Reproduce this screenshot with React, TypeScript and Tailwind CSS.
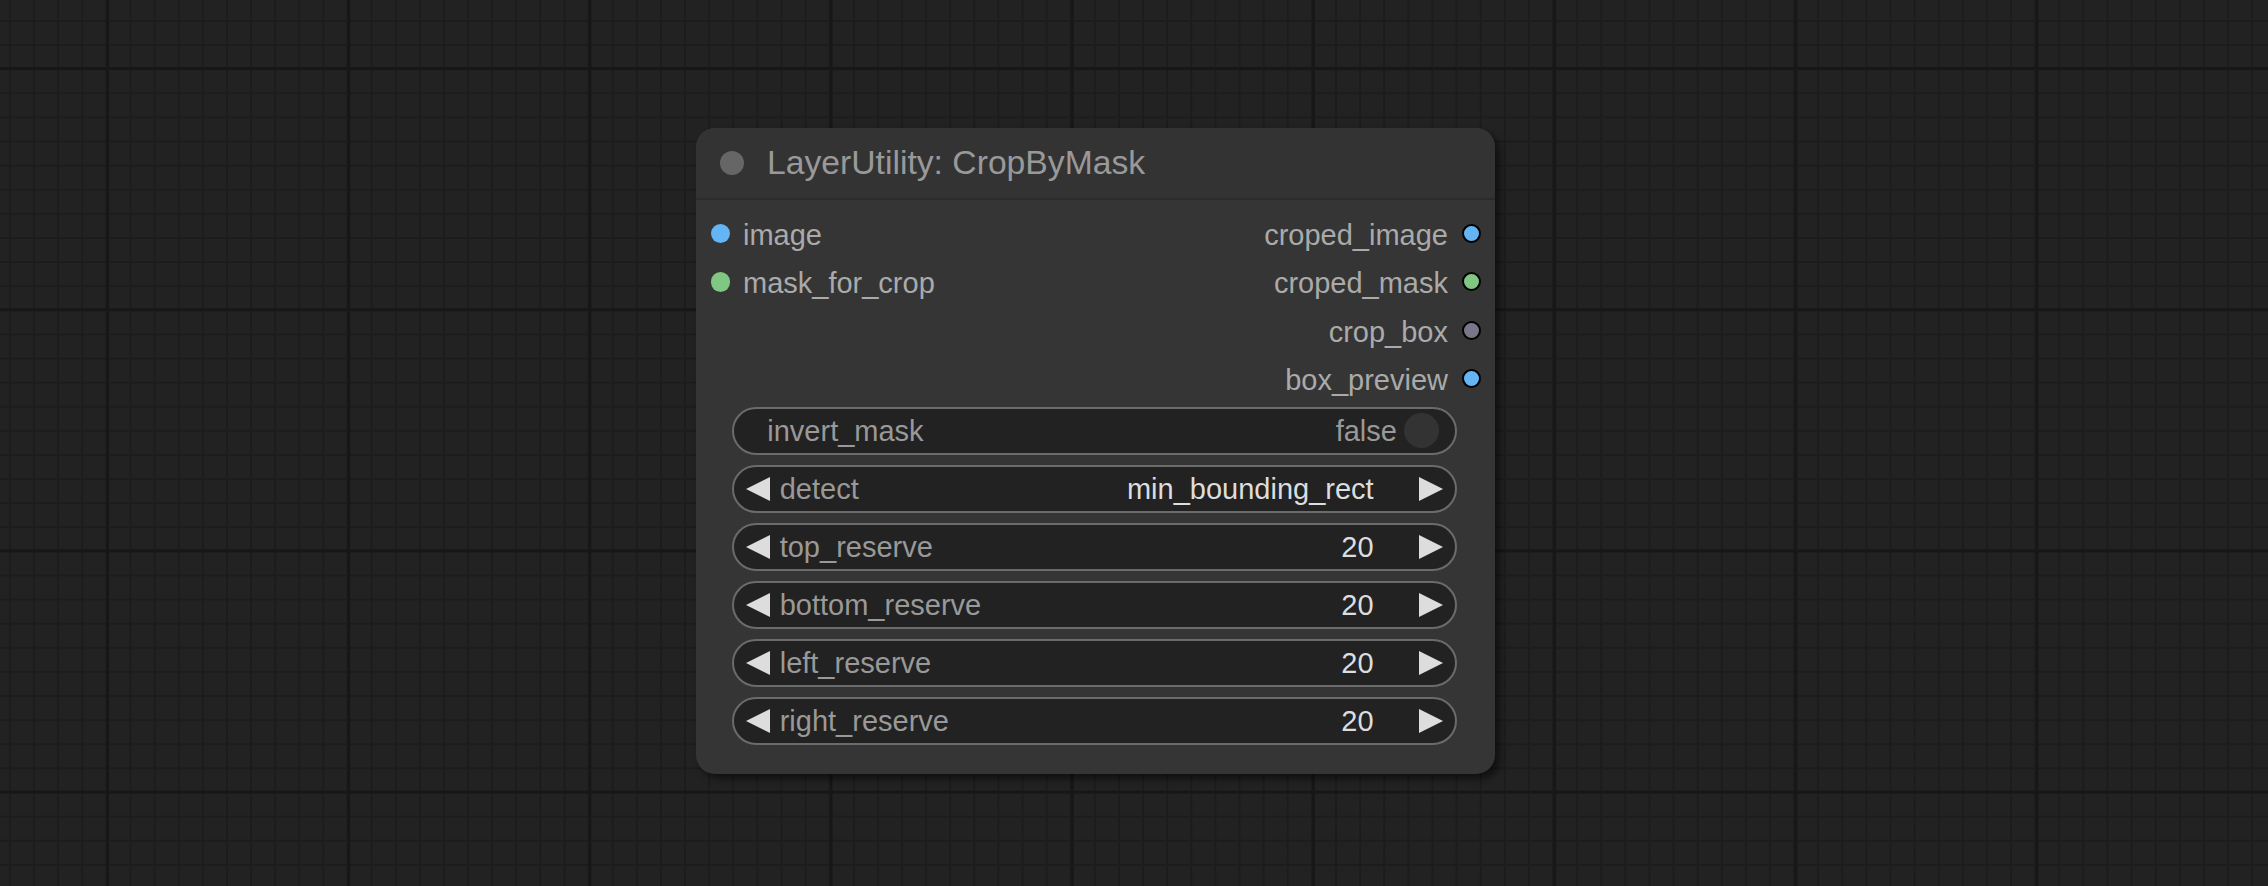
import React from "react";

const FONT = { fontFamily: '"Liberation Sans", Arial, sans-serif' };

type Slot = { label: string; color: string } | null;

const rows: [Slot, Slot][] = [
  [{ label: "image", color: "#64b5f6" }, { label: "croped_image", color: "#64b5f6" }],
  [{ label: "mask_for_crop", color: "#81c784" }, { label: "croped_mask", color: "#81c784" }],
  [null, { label: "crop_box", color: "#777788" }],
  [null, { label: "box_preview", color: "#64b5f6" }],
];

const combos: [string, string][] = [
  ["detect", "min_bounding_rect"],
  ["top_reserve", "20"],
  ["bottom_reserve", "20"],
  ["left_reserve", "20"],
  ["right_reserve", "20"],
];

function LeftArrow() {
  return (
    <svg width="24" height="24" viewBox="0 0 24 24" className="shrink-0">
      <polygon points="24,0 0,12 24,24" fill="#dddddd" />
    </svg>
  );
}

function RightArrow() {
  return (
    <svg width="24" height="24" viewBox="0 0 24 24" className="shrink-0">
      <polygon points="0,0 24,12 0,24" fill="#dddddd" />
    </svg>
  );
}

export default function App() {
  return (
    <div
      className="relative w-[2268px] h-[886px] overflow-hidden bg-[#222222] bg-[linear-gradient(to_right,#171717_3px,transparent_3px),linear-gradient(to_bottom,#171717_3px,transparent_3px),linear-gradient(to_right,#1c1c1c_2px,transparent_2px),linear-gradient(to_bottom,#1c1c1c_2px,transparent_2px)] bg-[size:241.2px_241.2px,241.2px_241.2px,24.12px_24.12px,24.12px_24.12px] bg-[position:106px_67px,106px_67px,9px_20px,9px_20px]"
      style={FONT}
    >
      <div className="absolute left-[696px] top-[128px] w-[799px] rounded-[19px] bg-[#353535] shadow-[5px_5px_7px_rgba(0,0,0,0.5)] flex flex-col">
        {/* Title */}
        <div className="h-[72px] rounded-t-[19px] bg-[#333333] border-b-2 border-[#2b2b2b] flex items-center pl-[24px] gap-[23px]">
          <div className="w-[24px] h-[24px] rounded-full bg-[#666666] shrink-0" />
          <span className="text-[33.7px] leading-none text-[#999999] whitespace-nowrap">
            LayerUtility: CropByMask
          </span>
        </div>

        {/* Slots */}
        <div className="flex flex-col pt-[9.6px]">
          {rows.map(([inp, out], i) => (
            <div key={i} className="h-[48.2px] flex items-center justify-between pl-[15px] pr-[14.5px]">
              <div className="flex items-center gap-[12.7px]">
                {inp && (
                  <>
                    <div className="w-[19.3px] h-[19.3px] rounded-full shrink-0" style={{ backgroundColor: inp.color }} />
                    <span className="text-[29px] leading-none text-[#aaaaaa] pt-[4px] whitespace-nowrap">{inp.label}</span>
                  </>
                )}
              </div>
              <div className="flex items-center gap-[13.5px]">
                {out && (
                  <>
                    <span className="text-[29px] leading-none text-[#aaaaaa] pt-[4px] whitespace-nowrap">{out.label}</span>
                    <div
                      className="w-[19px] h-[19px] rounded-full border-2 border-black shrink-0"
                      style={{ backgroundColor: out.color }}
                    />
                  </>
                )}
              </div>
            </div>
          ))}
        </div>

        {/* Widgets */}
        <div className="flex flex-col gap-[9.7px] mt-[4.3px] mb-[29px] ml-[35.7px] mr-[37.7px]">
          {/* Toggle */}
          <div className="h-[48.3px] rounded-full border-[2.4px] border-[#6b6b6b] bg-[#222222] flex items-center pl-[33.6px] pr-[16.4px]">
            <span className="text-[29px] leading-none text-[#999999] pt-[2px] whitespace-nowrap">invert_mask</span>
            <span className="flex-1" />
            <span className="text-[29px] leading-none text-[#999999] pt-[2px] whitespace-nowrap">false</span>
            <div className="w-[35px] h-[35px] rounded-full bg-[#333333] ml-[7px] shrink-0" />
          </div>

          {combos.map(([label, value]) => (
            <div
              key={label}
              className="h-[48.3px] rounded-full border-[2.4px] border-[#6b6b6b] bg-[#222222] flex items-center pl-[12.5px] pr-[12.2px]"
            >
              <LeftArrow />
              <span className="ml-[9.5px] text-[29px] leading-none text-[#999999] pt-[2px] whitespace-nowrap">{label}</span>
              <span className="flex-1" />
              <span className="text-[29px] leading-none text-[#dddddd] pt-[2px] whitespace-nowrap mr-[45.5px]">{value}</span>
              <RightArrow />
            </div>
          ))}
        </div>
      </div>
    </div>
  );
}
